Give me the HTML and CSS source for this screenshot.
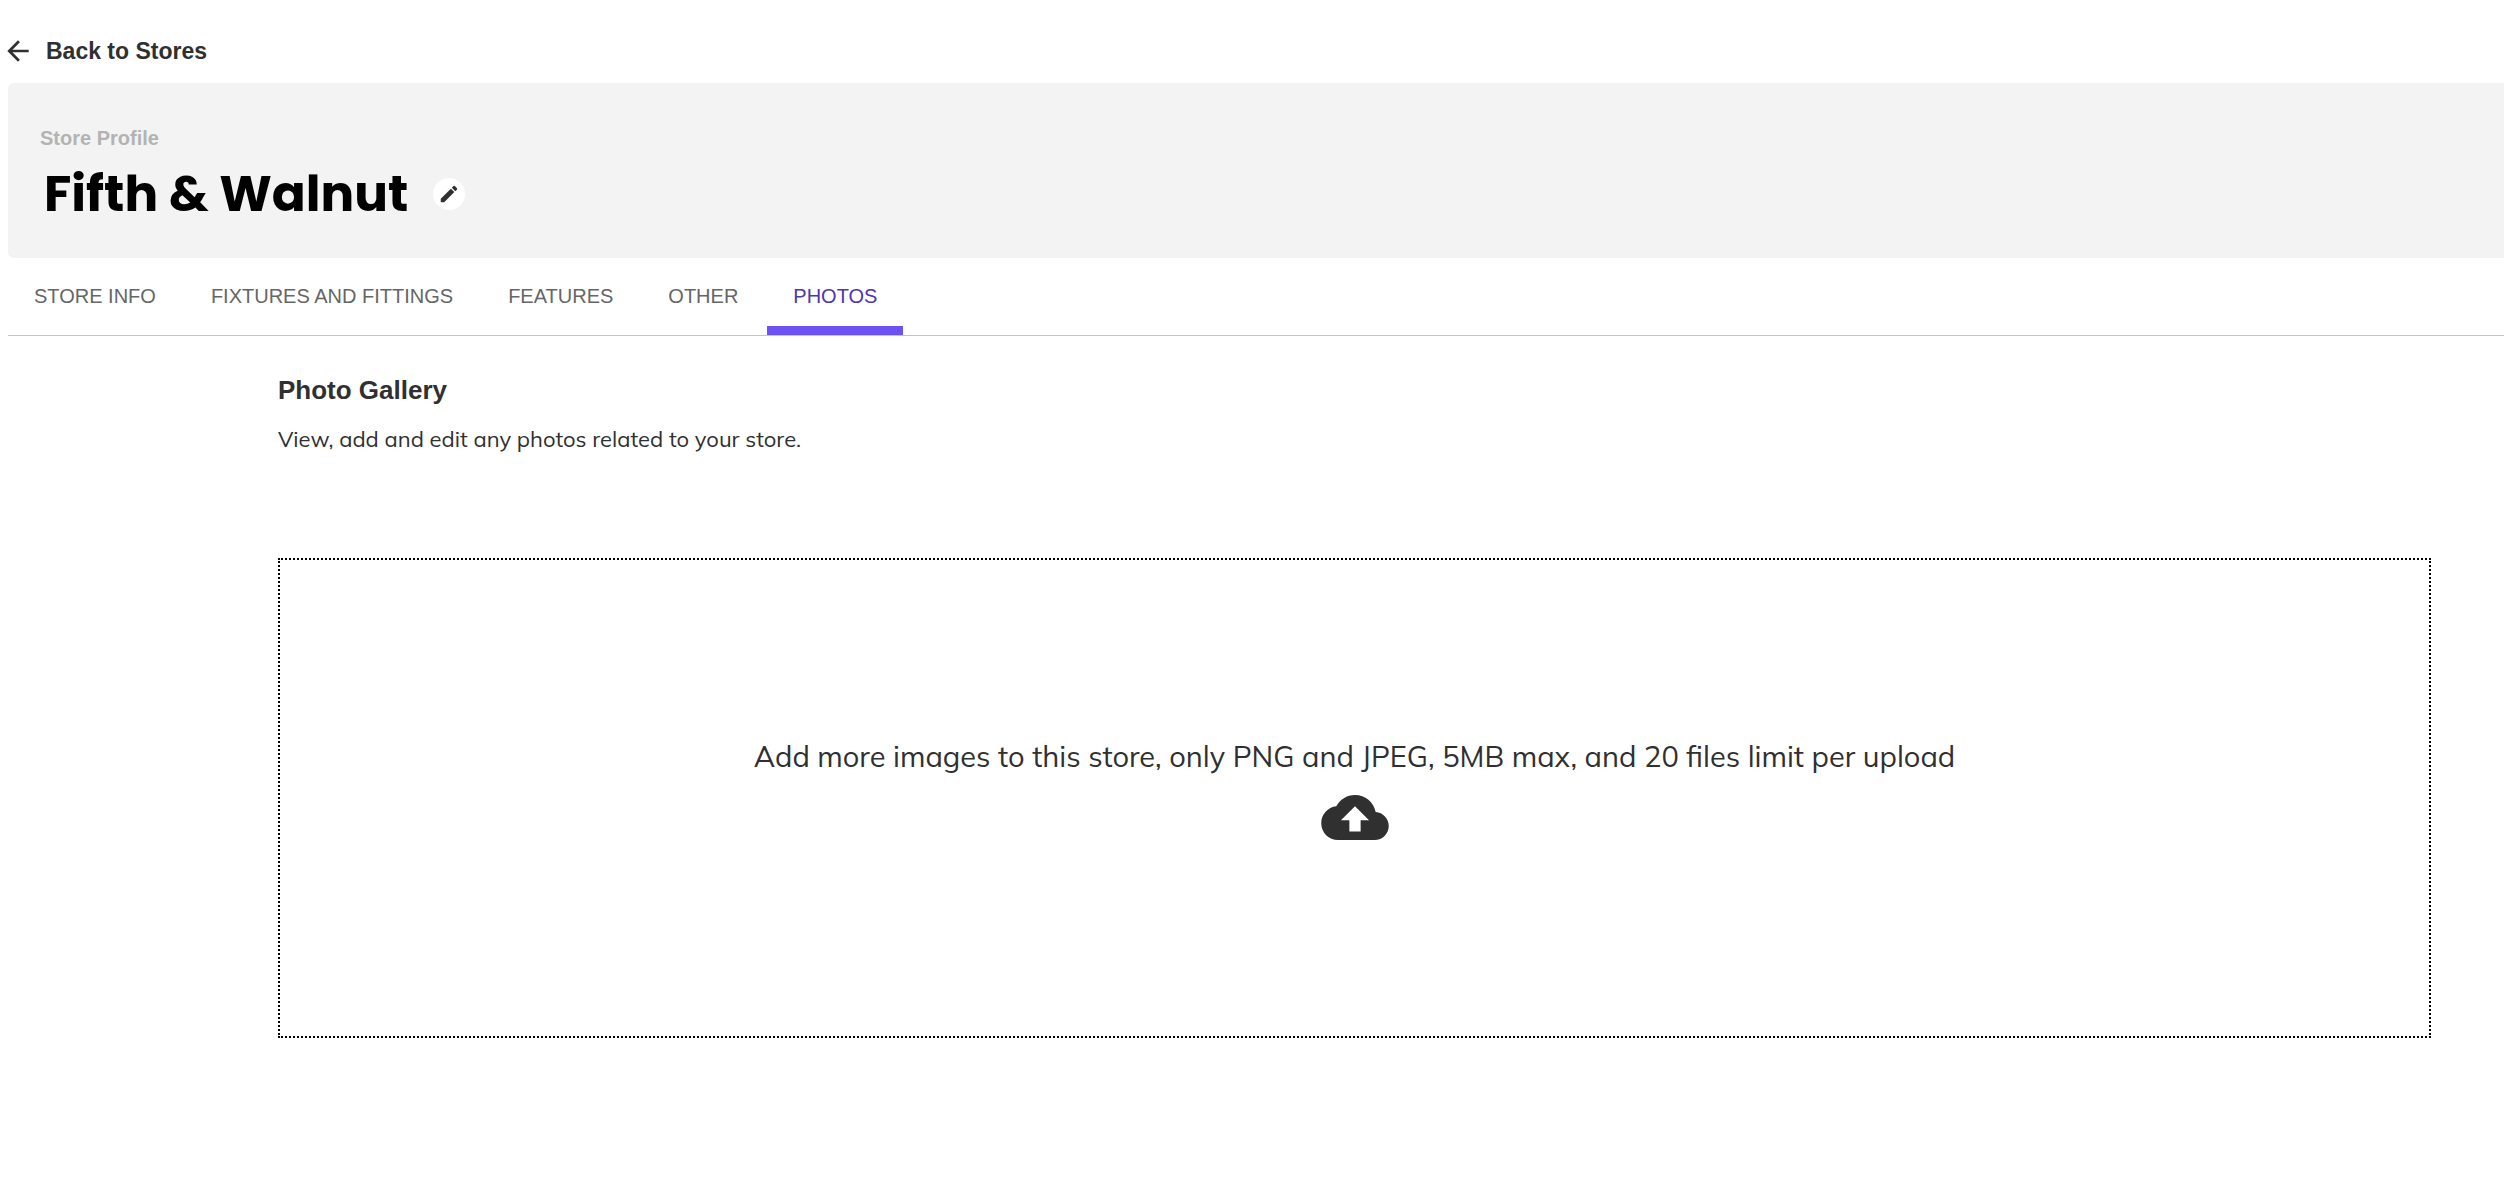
FILE: index.html
```html
<!DOCTYPE html>
<html lang="en">
<head>
<meta charset="utf-8">
<title>Fifth &amp; Walnut – Photos</title>
<meta name="viewport" content="width=device-width, initial-scale=1">
<link rel="stylesheet" href="styles.css">
</head>
<body>
<div class="page">
  <a class="back-link" href="#stores">
    <svg class="back-icon" viewBox="0 0 24 24" aria-hidden="true"><path d="M20 11H7.83l5.59-5.59L12 4l-8 8 8 8 1.41-1.41L7.83 13H20v-2z"/></svg>
    <span>Back to Stores</span>
  </a>

  <header class="profile">
    <p class="profile-label">Store Profile</p>
    <div class="profile-row">
      <h1 class="profile-name">Fifth &amp; Walnut</h1>
      <button class="edit-button" type="button" aria-label="Edit store name">
        <svg class="edit-icon" viewBox="0 0 24 24" aria-hidden="true"><path d="M3 17.25V21h3.75L17.81 9.94l-3.75-3.75L3 17.25zM20.71 7.04c.39-.39.39-1.02 0-1.41l-2.34-2.34a.9959.9959 0 0 0-1.41 0l-1.83 1.83 3.75 3.75 1.83-1.83z"/></svg>
      </button>
    </div>
  </header>

  <nav class="tabs" aria-label="Store sections">
    <a class="tab" href="#info">STORE INFO</a>
    <a class="tab" href="#fixtures">FIXTURES AND FITTINGS</a>
    <a class="tab" href="#features">FEATURES</a>
    <a class="tab" href="#other">OTHER</a>
    <a class="tab tab-active" href="#photos" aria-current="page">PHOTOS</a>
  </nav>

  <main class="gallery">
    <h2 class="gallery-title">Photo Gallery</h2>
    <p class="gallery-text">View, add and edit any photos related to your store.</p>
    <label class="dropzone" for="photo-upload">
      <span>Add more images to this store, only PNG and JPEG, 5MB max, and 20 files limit per upload</span>
      <svg class="cloud-icon" viewBox="0 4 24 16" aria-hidden="true"><path d="M19.35 10.04C18.67 6.59 15.64 4 12 4 9.11 4 6.6 5.64 5.35 8.04 2.34 8.36 0 10.91 0 14c0 3.31 2.69 6 6 6h13c2.76 0 5-2.24 5-5 0-2.64-2.05-4.78-4.65-4.96zM14 13v4h-4v-4H7l5-5 5 5h-3z"/></svg>
      <input class="file-input" id="photo-upload" type="file" accept="image/png,image/jpeg" multiple>
    </label>
  </main>
</div>
</body>
</html>
```
FILE: styles.css
```css
* {
  box-sizing: border-box;
}

body {
  margin: 0;
  background: #fff;
  color: #303030;
  font-family: "Liberation Sans", Arial, sans-serif;
}

h1,
h2,
p {
  margin: 0;
}

.page {
  padding: 34px 0 40px 8px;
}

.back-link {
  display: flex;
  align-items: center;
  gap: 12px;
  width: fit-content;
  height: 34px;
  margin-left: -6px;
  color: inherit;
  font-size: 23px;
  font-weight: 700;
  text-decoration: none;
}

.back-icon {
  width: 32px;
  height: 32px;
  fill: currentColor;
}

.profile {
  margin-top: 15px;
  padding: 42px 32px 30px;
  border-radius: 6px 0 0 6px;
  background: #f3f3f3;
}

.profile-label {
  color: #b3b3b3;
  font-size: 20px;
  font-weight: 700;
  line-height: 26px;
}

.profile-row {
  display: flex;
  align-items: center;
  gap: 25px;
  margin-top: 8px;
  padding: 0 4px;
}

.profile-name {
  color: #000;
  font-family: Poppins, Inter, sans-serif;
  font-size: 50px;
  font-weight: 700;
  line-height: 69px;
}

.edit-button {
  display: grid;
  place-items: center;
  width: 32px;
  height: 32px;
  padding: 0;
  border: 0;
  border-radius: 50%;
  background: #fff;
  color: #303030;
  cursor: pointer;
}

.edit-icon {
  width: 22px;
  height: 22px;
  fill: currentColor;
}

.tabs {
  display: flex;
  gap: 3px;
  border-bottom: 1px solid #c4c4c4;
}

.tab {
  padding: 25px 26px 16px;
  border-bottom: 9px solid transparent;
  color: #666;
  font-size: 20px;
  line-height: 27px;
  text-decoration: none;
}

.tab-active {
  border-color: #6c52f2;
  color: #4e35b1;
}

.gallery {
  padding: 38px 73px 0 270px;
}

.gallery-title {
  font-size: 26px;
  line-height: 32px;
}

.gallery-text {
  margin-top: 18px;
  font-family: Mulish, Lato, sans-serif;
  font-size: 22px;
  line-height: 30px;
}

.dropzone {
  display: flex;
  flex-direction: column;
  align-items: center;
  justify-content: center;
  gap: 20px;
  min-height: 480px;
  margin-top: 104px;
  padding-bottom: 20px;
  border: 2px dotted #000;
  font-family: Mulish, Lato, sans-serif;
  font-size: 29px;
  line-height: 38px;
  text-align: center;
  cursor: pointer;
}

.cloud-icon {
  width: 68px;
  height: 45px;
  fill: currentColor;
}

.file-input {
  position: absolute;
  width: 1px;
  height: 1px;
  opacity: 0;
}
```
